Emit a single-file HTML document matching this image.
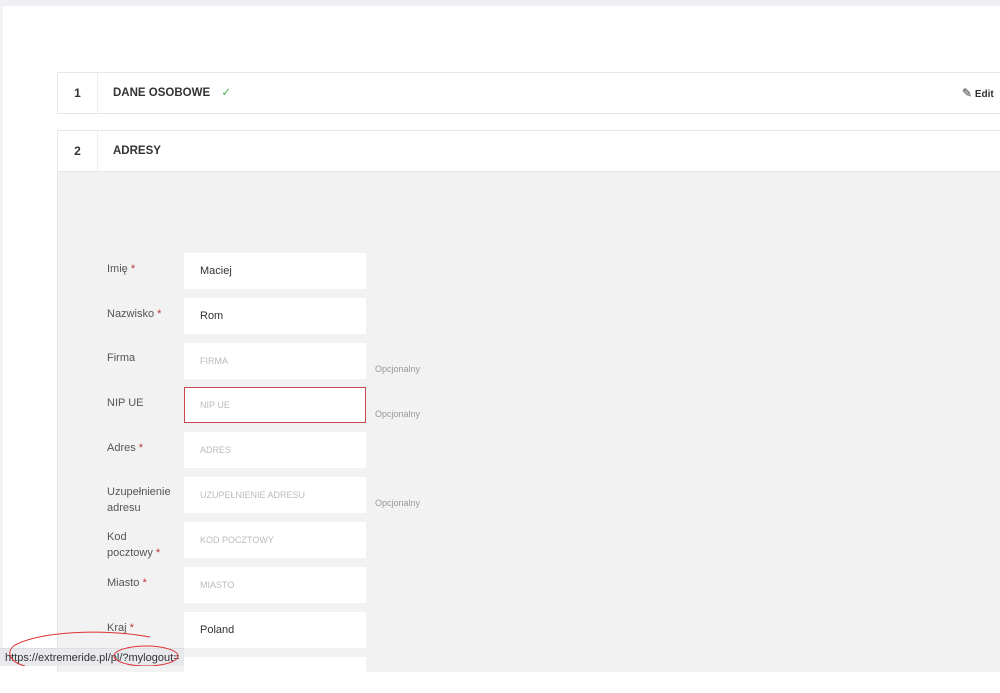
<!DOCTYPE html>
<html><head><meta charset="utf-8"><style>
*{margin:0;padding:0;box-sizing:border-box}
body{width:1000px;height:666px;overflow:hidden;background:#fff;font-family:"Liberation Sans",sans-serif;position:relative}
.top{position:absolute;left:0;top:0;width:1000px;height:6px;background:#eef0f3}
.lstrip{position:absolute;left:0;top:6px;width:3px;height:660px;background:#f3f3f3}
.step{position:absolute;left:57px;width:950px;height:42px;border:1px solid #e6e6e6;background:#fff}
.num{position:absolute;left:0;top:0;width:40px;height:100%;border-right:1px solid #eee;font-weight:bold;font-size:12px;color:#333;text-align:center;line-height:40px}
.ttl{position:absolute;left:55px;top:0;line-height:40px;font-weight:bold;font-size:11.5px;color:#333}
.gray{position:absolute;left:57px;top:172px;width:950px;height:500px;background:#f2f2f2;border-left:1px solid #e6e6e6}
.lbl{position:absolute;left:107px;font-size:11px;color:#555;line-height:16px}
.lbl b{color:#c0323c;font-weight:normal}
.inp{position:absolute;left:184px;width:182px;height:36px;background:#fff;font-size:11px;color:#333;padding-left:16px;line-height:36px}
.ph{color:#bbb;font-size:9px}
.opt{position:absolute;left:375px;font-size:9px;color:#999}
.status{position:absolute;left:0;top:648px;width:184px;height:18px;background:#e8e9ec;border-top:1px solid #ddd;font-size:11px;color:#333;padding-left:5px;line-height:18px}
</style></head><body>
<div class="top"></div><div class="lstrip"></div>
<div class="step" style="top:72px"><div class="num">1</div><div class="ttl">DANE OSOBOWE <span style="color:#4caf50;font-weight:normal;margin-left:8px">✓</span></div>
<div style="position:absolute;left:904px;top:0;line-height:40px;font-size:10px;color:#333;font-weight:bold"><span style="color:#888;font-size:12px">✎</span> Edit</div></div>
<div class="step" style="top:130px"><div class="num">2</div><div class="ttl">ADRESY</div></div>
<div class="gray"></div>
<div class="lbl" style="top:261px">Imię <b>*</b></div><div class="inp" style="top:253px">Maciej</div>
<div class="lbl" style="top:306px">Nazwisko <b>*</b></div><div class="inp" style="top:298px">Rom</div>
<div class="lbl" style="top:350px">Firma</div><div class="inp" style="top:343px"><span class="ph">FIRMA</span></div><div class="opt" style="top:364px">Opcjonalny</div>
<div class="lbl" style="top:395px">NIP UE</div><div class="inp" style="top:387px;border:1px solid #c9474f;padding-left:15px;line-height:34px"><span class="ph">NIP UE</span></div><div class="opt" style="top:409px">Opcjonalny</div>
<div class="lbl" style="top:440px">Adres <b>*</b></div><div class="inp" style="top:432px"><span class="ph">ADRES</span></div>
<div class="lbl" style="top:484px">Uzupełnienie<br>adresu</div><div class="inp" style="top:477px"><span class="ph">UZUPEŁNIENIE ADRESU</span></div><div class="opt" style="top:498px">Opcjonalny</div>
<div class="lbl" style="top:529px">Kod<br>pocztowy <b>*</b></div><div class="inp" style="top:522px"><span class="ph">KOD POCZTOWY</span></div>
<div class="lbl" style="top:575px">Miasto <b>*</b></div><div class="inp" style="top:567px"><span class="ph">MIASTO</span></div>
<div class="lbl" style="top:620px">Kraj <b>*</b></div><div class="inp" style="top:612px">Poland</div>
<div class="inp" style="top:657px"></div>
<div class="status">https://extremeride.pl/pl/?mylogout=</div>
<svg style="position:absolute;left:0;top:0" width="1000" height="666">
<path d="M150 637 C100 628 40 632 15 645 C5 652 10 662 25 666" fill="none" stroke="#d33" stroke-width="1"/>
<ellipse cx="146" cy="656" rx="32" ry="10" fill="none" stroke="#d33" stroke-width="1"/>
</svg>
</body></html>
